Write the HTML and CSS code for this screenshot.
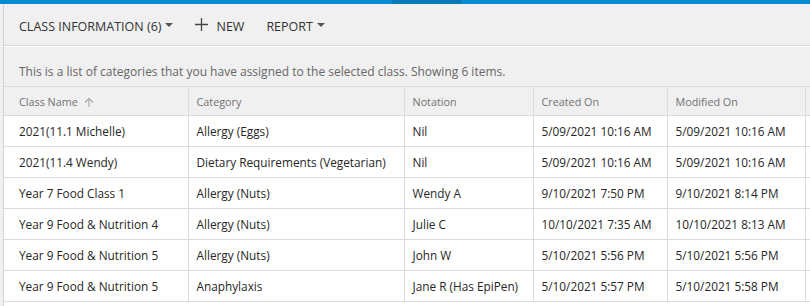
FILE: index.html
```html
<!DOCTYPE html>
<html lang="en">
<head>
    <meta charset="UTF-8">
    <title>Class Information</title>
    <link rel="stylesheet" href="styles.css">
</head>
<body>
    <div class="topbar"><div class="topbar-mark"></div></div>
    <div class="frame">
        <div class="toolbar">
            <span class="tool">CLASS INFORMATION (6)<span class="caret"></span></span>
            <span class="tool tool-new">
                <svg class="plus" width="13" height="13" viewBox="0 0 13 13"><path d="M6.5 0v13M0 6.5h13" stroke="#444" stroke-width="1.3" fill="none"/></svg>
                NEW
            </span>
            <span class="tool">REPORT<span class="caret"></span></span>
        </div>
        <div class="desc">This is a list of categories that you have assigned to the selected class. Showing 6 items.</div>
        <div class="grid-wrap">
            <table class="grid">
                <colgroup>
                    <col style="width:184px">
                    <col style="width:216px">
                    <col style="width:129px">
                    <col style="width:134px">
                    <col style="width:138px">
                    <col>
                </colgroup>
                <thead>
                    <tr>
                        <th>Class Name
                            <svg class="sort" width="10" height="10" viewBox="0 0 10 10"><path d="M5 1.5v8.5M1 5.5l4-4 4 4" stroke="#a8a8a8" stroke-width="1.1" fill="none"/></svg>
                        </th>
                        <th>Category</th>
                        <th>Notation</th>
                        <th>Created On</th>
                        <th>Modified On</th>
                        <th></th>
                    </tr>
                </thead>
                <tbody id="rows"></tbody>
            </table>
        </div>
    </div>

    <script>
        const items = [
            ['2021(11.1 Michelle)', 'Allergy (Eggs)', 'Nil', '5/09/2021 10:16 AM', '5/09/2021 10:16 AM'],
            ['2021(11.4 Wendy)', 'Dietary Requirements (Vegetarian)', 'Nil', '5/09/2021 10:16 AM', '5/09/2021 10:16 AM'],
            ['Year 7 Food Class 1', 'Allergy (Nuts)', 'Wendy A', '9/10/2021 7:50 PM', '9/10/2021 8:14 PM'],
            ['Year 9 Food & Nutrition 4', 'Allergy (Nuts)', 'Julie C', '10/10/2021 7:35 AM', '10/10/2021 8:13 AM'],
            ['Year 9 Food & Nutrition 5', 'Allergy (Nuts)', 'John W', '5/10/2021 5:56 PM', '5/10/2021 5:56 PM'],
            ['Year 9 Food & Nutrition 5', 'Anaphylaxis', 'Jane R (Has EpiPen)', '5/10/2021 5:57 PM', '5/10/2021 5:58 PM']
        ];

        // Build the table body
        const tbody = document.getElementById('rows');
        items.forEach(item => {
            const row = document.createElement('tr');
            item.forEach(text => {
                const cell = document.createElement('td');
                cell.textContent = text;
                row.appendChild(cell);
            });
            row.appendChild(document.createElement('td'));
            tbody.appendChild(row);
        });
    </script>
</body>
</html>
```

FILE: styles.css
```css
body {
    margin: 0;
    background-color: #f0f0f0;
    font-family: "Segoe UI", "Open Sans", sans-serif;
    color: #262626;
}

.topbar {
    height: 4px;
    background-color: #0989d1;
}

.topbar-mark {
    margin-left: 392px;
    width: 69px;
    height: 4px;
    background-color: #0679b7;
}

.frame {
    display: flex;
    flex-direction: column;
    margin-left: 3px;
    border-left: 1px solid #d2d2d2;
    height: 302px;
}

.toolbar {
    display: flex;
    align-items: center;
    gap: 22px;
    height: 42px;
    padding-left: 15px;
    padding-top: 3px;
    box-sizing: border-box;
    border-bottom: 1px solid #d9d9d9;
    box-shadow: 0 1px 0 #ffffff;
    font-size: 12.5px;
    color: #333;
}

.tool {
    display: flex;
    align-items: center;
}

.tool-new {
    gap: 8px;
}

.caret {
    display: inline-block;
    margin-left: 4px;
    margin-top: -3px;
    border-left: 4px solid transparent;
    border-right: 4px solid transparent;
    border-top: 4px solid #555;
}

.plus {
    margin-top: -3px;
}

.desc {
    padding: 17px 0 6px 15px;
    font-size: 12px;
    line-height: 17px;
    color: #666;
}

.grid-wrap {
    flex: 1;
    background-color: #ffffff;
}

.grid {
    width: 806px;
    border-collapse: collapse;
    table-layout: fixed;
    font-size: 11.8px;
}

.grid th, .grid td {
    padding: 0 8px;
    text-align: left;
    border: 1px solid #dcdcdc;
    white-space: nowrap;
    overflow: hidden;
}

.grid th:first-child, .grid td:first-child {
    padding-left: 15px;
    border-left: none;
}

.grid th:last-child, .grid td:last-child {
    border-right: none;
}

.grid th {
    height: 28px;
    background-color: #f0f0f0;
    font-weight: normal;
    font-size: 10.8px;
    color: #707070;
}

.grid td {
    height: 30px;
    background-color: #ffffff;
}

.sort {
    margin-left: 3px;
    vertical-align: -1px;
}
```
